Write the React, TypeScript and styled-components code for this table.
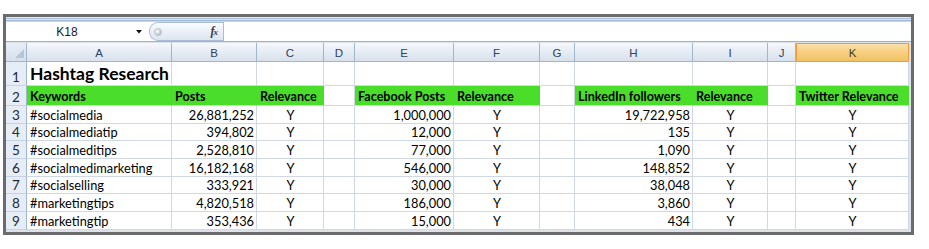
import React from "react";
import styled, { createGlobalStyle, css } from "styled-components";

const GlobalStyle = createGlobalStyle`
  html, body {
    margin: 0;
    padding: 0;
    background: #ffffff;
  }
  body {
    font-family: "Lato", "Liberation Sans", sans-serif;
  }
`;

type Align = "left" | "right" | "center";

const COLS = ["A", "B", "C", "D", "E", "F", "G", "H", "I", "J", "K"];
const COL_WIDTHS = [21, 145, 85, 67, 31, 99, 86, 35, 118, 75, 28, 113];
const ROW_HEIGHTS = [19, 24, 20, 18, 17, 18, 18, 17, 18, 18];
const ALIGN: Align[] = ["left", "right", "center", "left", "right", "center", "left", "right", "center", "left", "center"];

const HEADERS = ["Keywords", "Posts", "Relevance", "", "Facebook Posts", "Relevance", "", "LinkedIn followers", "Relevance", "", "Twitter Relevance"];

const DATA = [
  ["#socialmedia", "26,881,252", "Y", "", "1,000,000", "Y", "", "19,722,958", "Y", "", "Y"],
  ["#socialmediatip", "394,802", "Y", "", "12,000", "Y", "", "135", "Y", "", "Y"],
  ["#socialmeditips", "2,528,810", "Y", "", "77,000", "Y", "", "1,090", "Y", "", "Y"],
  ["#socialmedimarketing", "16,182,168", "Y", "", "546,000", "Y", "", "148,852", "Y", "", "Y"],
  ["#socialselling", "333,921", "Y", "", "30,000", "Y", "", "38,048", "Y", "", "Y"],
  ["#marketingtips", "4,820,518", "Y", "", "186,000", "Y", "", "3,860", "Y", "", "Y"],
  ["#marketingtip", "353,436", "Y", "", "15,000", "Y", "", "434", "Y", "", "Y"],
];

const Frame = styled.div`
  margin: 14px 0 0 3px;
  width: 911px;
  height: 221px;
  box-sizing: border-box;
  border: 3px solid #6b6b6b;
  background: #dde2ea;
  overflow: hidden;
`;

const RibbonEdge = styled.div`
  height: 5px;
  background: linear-gradient(
    to bottom,
    #e4ebf4 0px,
    #e4ebf4 1px,
    #a9bed8 1px,
    #a9bed8 2px,
    #dbe5f1 2px,
    #dbe5f1 3px,
    #a3b9d4 3px,
    #a3b9d4 4px,
    #c9d7e8 4px
  );
`;

const FormulaBar = styled.div`
  display: flex;
  align-items: stretch;
  height: 19px;
  background: #ffffff;
  border-bottom: 1px solid #9cb3ce;
  margin-bottom: 1px;
`;

const NameBox = styled.div`
  width: 122px;
  display: flex;
  align-items: center;
  justify-content: center;
  font-family: "Liberation Sans", Arial, sans-serif;
  font-size: 12px;
  color: #1a1a1a;
`;

const DropArrow = styled.div`
  width: 17px;
  display: flex;
  align-items: center;
  justify-content: center;
  padding-left: 2px;
`;

const FxPill = styled.div`
  margin-left: 2px;
  width: 74px;
  box-sizing: border-box;
  border: 1px solid #a9bdd6;
  border-right: none;
  border-radius: 9px 0 0 9px;
  background: linear-gradient(to bottom, #fbfcfe 0%, #e9eff7 55%, #dbe4f0 100%);
  display: flex;
  align-items: center;
  justify-content: space-between;
  padding: 0 6px 0 4px;
`;

const Knob = styled.div`
  width: 6px;
  height: 6px;
  border-radius: 50%;
  background: radial-gradient(circle at 35% 35%, #ffffff 0%, #c9ced6 60%, #9aa3af 100%);
  border: 1px solid #b9c0ca;
`;

const Fx = styled.span`
  font-family: "Liberation Serif", "Times New Roman", serif;
  font-style: italic;
  font-weight: bold;
  font-size: 12px;
  color: #3b3b3b;
  letter-spacing: -1px;
  & small {
    font-size: 9px;
  }
`;

const FormulaInput = styled.div`
  flex: 1;
  border-left: 1px solid #a9bdd6;
  background: #ffffff;
`;

const Sheet = styled.div`
  display: grid;
  grid-template-columns: ${COL_WIDTHS.map((w) => `${w}px`).join(" ")};
  grid-template-rows: ${ROW_HEIGHTS.map((h) => `${h}px`).join(" ")};
  width: 903px;
  background: #ffffff;
`;

const headerFace = css`
  box-sizing: border-box;
  border-right: 1px solid #9eb6ce;
  border-bottom: 1px solid #9eb6ce;
  font-family: "Liberation Sans", Arial, sans-serif;
  font-size: 11.5px;
  color: #2c4360;
  display: flex;
  align-items: center;
  justify-content: center;
`;

const Corner = styled.div`
  ${headerFace};
  background: linear-gradient(to bottom, #e9eef6, #d6e0ec);
  align-items: flex-end;
  justify-content: flex-end;
  padding: 0 2px 3px 0;
`;

const ColHeader = styled.div<{ $active?: boolean }>`
  ${headerFace};
  background: linear-gradient(to bottom, #f6f8fb 0%, #e6ecf4 50%, #d8e1ec 100%);
  padding-top: 1px;
  ${(p) =>
    p.$active &&
    css`
      background: linear-gradient(to bottom, #fae0a8 0%, #f6cf80 50%, #f1c163 100%);
      border: 1px solid #f29a3c;
      color: #4b3b21;
    `}
`;

const RowHeader = styled.div`
  ${headerFace};
  background: #e6edf6;
  border-bottom-color: #c5d3e4;
  font-family: "Lato", "Liberation Sans", sans-serif;
  font-size: 13.5px;
  color: #1c2a3a;
  align-items: flex-end;
`;

const Cell = styled.div<{ $align: Align; $fill?: boolean; $bold?: boolean; $title?: boolean }>`
  box-sizing: border-box;
  border-right: 1px solid ${(p) => (p.$fill ? "#4ade2b" : "#d0d7e5")};
  border-bottom: 1px solid #d0d7e5;
  background: ${(p) => (p.$fill ? "#4ade2b" : "#ffffff")};
  display: flex;
  align-items: flex-end;
  justify-content: ${(p) => (p.$align === "left" ? "flex-start" : p.$align === "right" ? "flex-end" : "center")};
  padding: 0 2px 0 3px;
  font-family: "Lato", "Liberation Sans", sans-serif;
  font-size: ${(p) => (p.$title ? "17.5px" : p.$bold ? "12.6px" : "12.8px")};
  font-weight: ${(p) => (p.$bold || p.$title ? 700 : 400)};
  color: #000000;
  white-space: nowrap;
  line-height: ${(p) => (p.$title ? "22px" : "16px")};
`;

const App: React.FC = () => {
  return (
    <>
      <GlobalStyle />
      <Frame>
        <RibbonEdge />
        <FormulaBar>
          <NameBox>K18</NameBox>
          <DropArrow>
            <svg width="6" height="4" viewBox="0 0 6 4">
              <path d="M0 0 L6 0 L3 3.5 Z" fill="#111" />
            </svg>
          </DropArrow>
          <FxPill>
            <Knob />
            <Fx>
              f<small>x</small>
            </Fx>
          </FxPill>
          <FormulaInput />
        </FormulaBar>
        <Sheet>
          <Corner>
            <svg width="9" height="9" viewBox="0 0 9 9">
              <path d="M0 9 L9 9 L9 0 Z" fill="#b5c6db" />
            </svg>
          </Corner>
          {COLS.map((c) => (
            <ColHeader key={c} $active={c === "K"}>
              {c}
            </ColHeader>
          ))}

          <RowHeader>1</RowHeader>
          {COLS.map((c, i) => (
            <Cell key={`t${c}`} $align="left" $title={i === 0}>
              {i === 0 ? "Hashtag Research" : ""}
            </Cell>
          ))}

          <RowHeader>2</RowHeader>
          {HEADERS.map((h, i) => {
            const blank = i === 3 || i === 6 || i === 9;
            return (
              <Cell key={`h${i}`} $align="left" $bold $fill={!blank}>
                {h}
              </Cell>
            );
          })}

          {DATA.map((row, r) => (
            <React.Fragment key={r}>
              <RowHeader>{r + 3}</RowHeader>
              {row.map((v, i) => (
                <Cell key={i} $align={ALIGN[i]}>
                  {v}
                </Cell>
              ))}
            </React.Fragment>
          ))}
        </Sheet>
      </Frame>
    </>
  );
};

export default App;
